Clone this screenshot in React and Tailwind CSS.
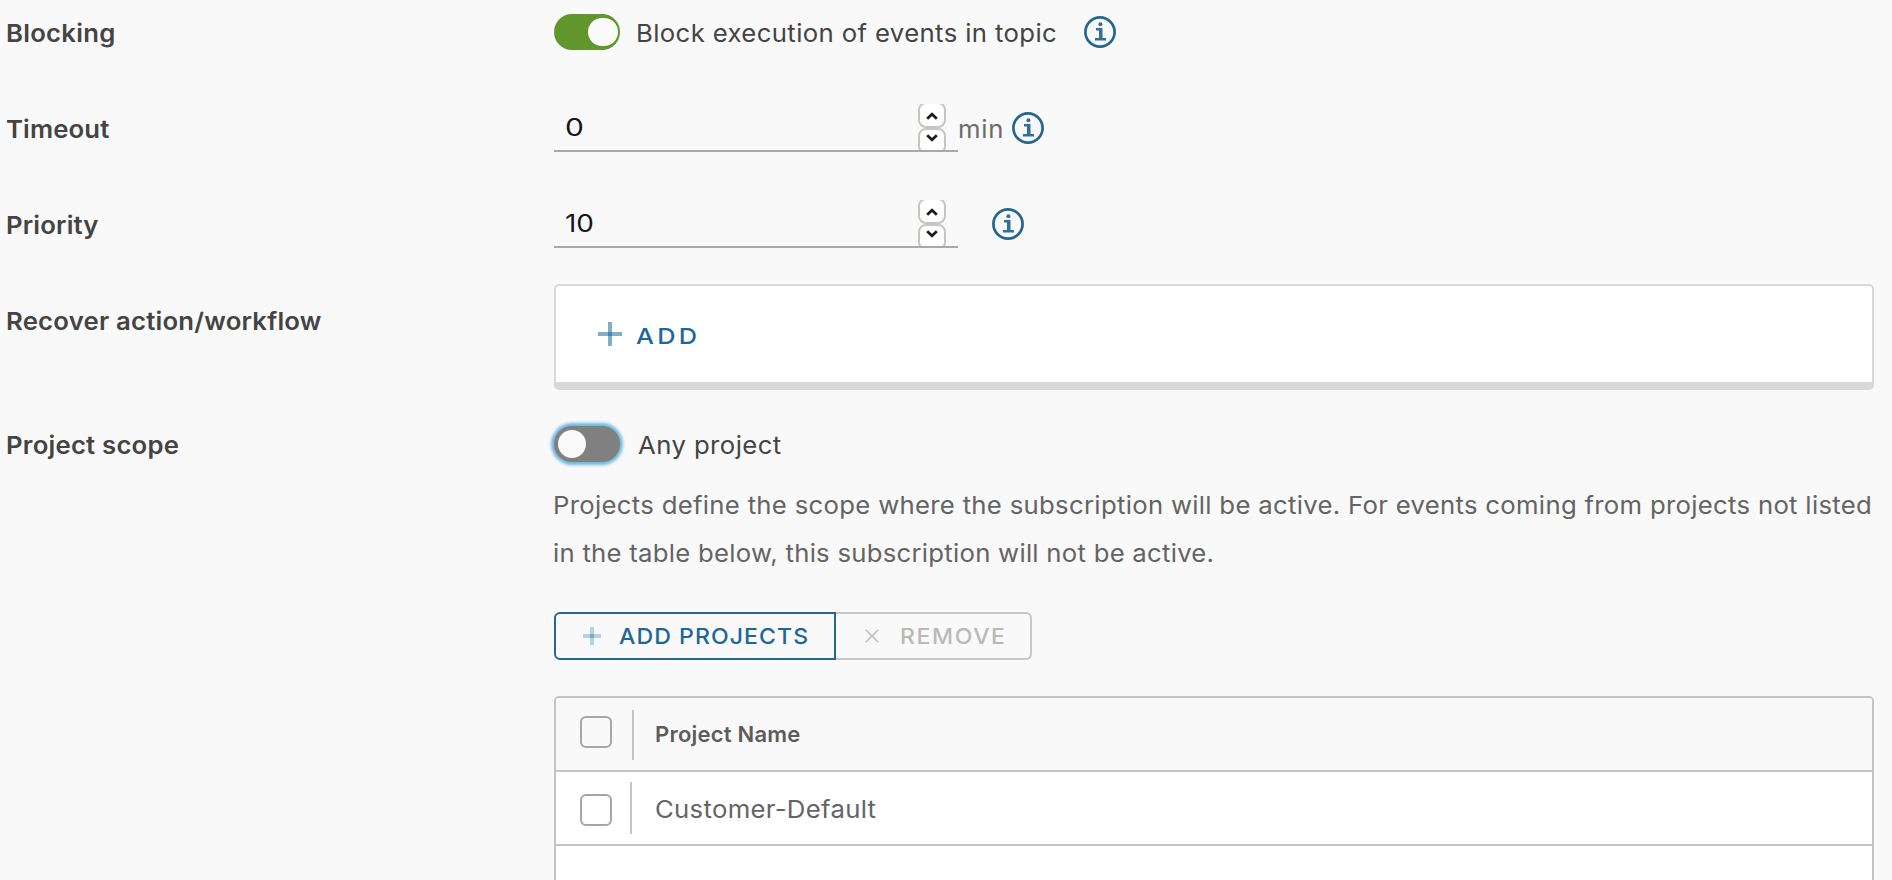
function InfoIcon() {
  return (
    <svg className="block h-8 w-8 shrink-0" viewBox="0 0 32 32" fill="none">
      <circle cx="16" cy="16" r="14.6" stroke="#256690" strokeWidth="2.7" />
      <circle cx="16.4" cy="8.2" r="2" fill="#2f6f99" />
      <path d="M12 12h6.5v10H22v2.6H11V22h4v-7.4h-3z" fill="#2f6f99" />
    </svg>
  );
}

function Label({ children, className = "tracking-[0.2px]" }) {
  return (
    <div className="flex h-16 w-[548px] shrink-0 items-center">
      <span className={`origin-left scale-x-105 pt-0.5 text-[24.5px] leading-8 font-semibold text-[#444444] ${className}`}>
        {children}
      </span>
    </div>
  );
}

function Row({ label, labelClass, className, children }) {
  return (
    <div className={`flex pl-1.5 ${className}`}>
      <Label className={labelClass}>{label}</Label>
      {children}
    </div>
  );
}

function Toggle({ on }) {
  return (
    <button
      role="switch"
      aria-checked={on}
      className={`flex h-9 w-[66px] shrink-0 items-center rounded-full ${
        on
          ? "justify-end bg-[#61962d] px-[2px]"
          : "justify-start bg-[#808080] px-1 shadow-[0_0_3px_3px_#6fb9e0]"
      }`}
    >
      <span className={`h-7 rounded-full bg-[#fafafa] ${on ? "w-[30px]" : "w-7"}`} />
    </button>
  );
}

function SpinButton({ up }) {
  return (
    <span className="flex h-[26px] w-7 shrink-0 justify-center rounded-[8px] border-2 border-[#cac4c0] bg-white">
      <svg className={`block h-2 w-3 ${up ? "mt-2" : "mt-1"}`} viewBox="0 0 12 8" fill="none">
        <path d={up ? "M1.2 6.8L6 2.2l4.8 4.6" : "M1.2 1.2L6 5.8l4.8-4.6"} stroke="#1c1c1c" strokeWidth="2.7" />
      </svg>
    </span>
  );
}

function NumberField({ value, className }) {
  return (
    <div className="mt-2 flex h-12 w-[404px] items-stretch justify-between border-b-2 border-[#a9a9a9] pr-3 pl-[11px]">
      <span className={`origin-left self-center text-[24.5px] leading-8 text-[#161616] ${className}`}>{value}</span>
      <span className="flex h-[46px] w-7 flex-col overflow-hidden">
        <span className="-mt-0.5 flex flex-col">
          <SpinButton up />
          <SpinButton />
        </span>
      </span>
    </div>
  );
}

function Checkbox({ className }) {
  return <span className={`ml-6 h-8 w-8 shrink-0 rounded-[6px] border-2 border-[#a6a6a6] ${className}`} />;
}

export default function App() {
  return (
    <div className="h-screen w-full overflow-hidden bg-[#f9f9f9] font-['Inter',sans-serif] text-[#444444]">
      <Row label="Blocking" labelClass="tracking-[0.24px]" className="h-24">
        <div className="flex h-16 items-center">
          <Toggle on />
          <div className="w-[464px] pt-0.5 pl-4">
            <span className="block origin-left scale-x-105 text-[24.5px] leading-8 tracking-[0.35px] whitespace-nowrap">
              Block execution of events in topic
            </span>
          </div>
          <InfoIcon />
        </div>
      </Row>

      <Row label="Timeout" labelClass="tracking-[0.1px]" className="h-24">
        <NumberField value="0" className="scale-x-[1.22]" />
        <div className="flex h-16 items-center">
          <div className="w-[54px] pt-0.5">
            <span className="block origin-left scale-x-105 text-[24.5px] leading-8 tracking-[0.7px] text-[#6c6c6c]">min</span>
          </div>
          <InfoIcon />
        </div>
      </Row>

      <Row label="Priority" labelClass="tracking-[0.14px]" className="h-24">
        <NumberField value="10" className="scale-x-[1.14]" />
        <div className="flex h-16 items-center pl-[34px]">
          <InfoIcon />
        </div>
      </Row>

      <Row label="Recover action/workflow" className="h-[124px]">
        <div className="-mt-1 flex h-[106px] w-[1320px] items-center rounded-[5px] border-2 border-b-8 border-[#d8d8d8] bg-white pl-[42px]">
          <svg className="block h-6 w-6" viewBox="0 0 24 24">
            <path d="M10 0h4v24h-4zM0 10h24v4H0z" fill="#7eb0cb" />
            <path d="M10 10h4v4h-4z" fill="#4586b0" />
          </svg>
          <div className="pt-[3px] pl-[14px]">
            <span className="block origin-left scale-x-[1.15] text-[22px] leading-8 font-medium tracking-[2.8px] text-[#1f6699]">
              ADD
            </span>
          </div>
        </div>
      </Row>

      <Row label="Project scope" className="">
        <div className="w-[1322px]">
          <div className="flex h-16 items-center">
            <Toggle on={false} />
            <div className="pt-0.5 pl-[18px]">
              <span className="block origin-left scale-x-105 text-[24.5px] leading-8 tracking-[0.4px]">Any project</span>
            </div>
          </div>

          <p className="mt-[5px] text-[24.5px] leading-[48px] whitespace-nowrap text-[#646464]">
            <span className="-ml-px block w-max origin-left scale-x-105 tracking-[0.28px]">
              Projects define the scope where the subscription will be active. For events coming from projects not listed
            </span>
            <span className="-ml-px block w-max origin-left scale-x-105 tracking-[0.24px]">
              in the table below, this subscription will not be active.
            </span>
          </p>

          <div className="mt-[35px] flex h-12">
            <button className="flex w-[282px] items-center rounded-l-[6px] border-2 border-[#256799] pl-[27px] text-[#1f6699]">
              <svg className="block h-5 w-[18px] shrink-0" viewBox="0 0 18 20">
                <path d="M7 1h4v18H7zM0 8h18v4H0z" fill="#b5d0e0" />
                <path d="M7 8h4v4H7z" fill="#7aabca" />
              </svg>
              <span className="ml-[18px] origin-left scale-x-105 text-[22px] leading-8 font-medium tracking-[1px] whitespace-nowrap">
                ADD PROJECTS
              </span>
            </button>
            <button className="flex w-[196px] items-center rounded-r-[6px] border-2 border-l-0 border-[#c8c8c8] pl-[29px] text-[#b9b9b9]">
              <svg className="block h-[14px] w-[14px] shrink-0" viewBox="0 0 14 14">
                <path d="M.7.7l12.6 12.6M13.3.7L.7 13.3" stroke="#bdbdbd" strokeWidth="1.5" />
              </svg>
              <span className="ml-[21px] origin-left scale-x-105 text-[22px] leading-8 font-medium tracking-[1.5px]">REMOVE</span>
            </button>
          </div>

          <div className="mt-9 h-[220px] w-[1320px] rounded-t-[5px] border-2 border-[#c4c4c4] bg-white">
            <div className="flex h-[74px] rounded-t-[3px] border-b-2 border-[#c4c4c4] bg-[#f9f9f9]">
              <Checkbox className="mt-[18px]" />
              <span className="mt-3 ml-5 h-[50px] w-0.5 bg-[#c4c4c4]" />
              <span className="ml-[21px] text-[22px] leading-[72px] font-semibold tracking-[0.22px] text-[#5c5c5c]">Project Name</span>
            </div>
            <div className="flex h-[74px] border-b-2 border-[#c4c4c4]">
              <Checkbox className="mt-[22px]" />
              <span className="mt-2.5 ml-[18px] h-[52px] w-0.5 bg-[#c4c4c4]" />
              <span className="ml-[23px] origin-left scale-x-105 text-[24.5px] leading-[74px] tracking-[0.28px] text-[#646464]">
                Customer-Default
              </span>
            </div>
          </div>
        </div>
      </Row>
    </div>
  );
}
